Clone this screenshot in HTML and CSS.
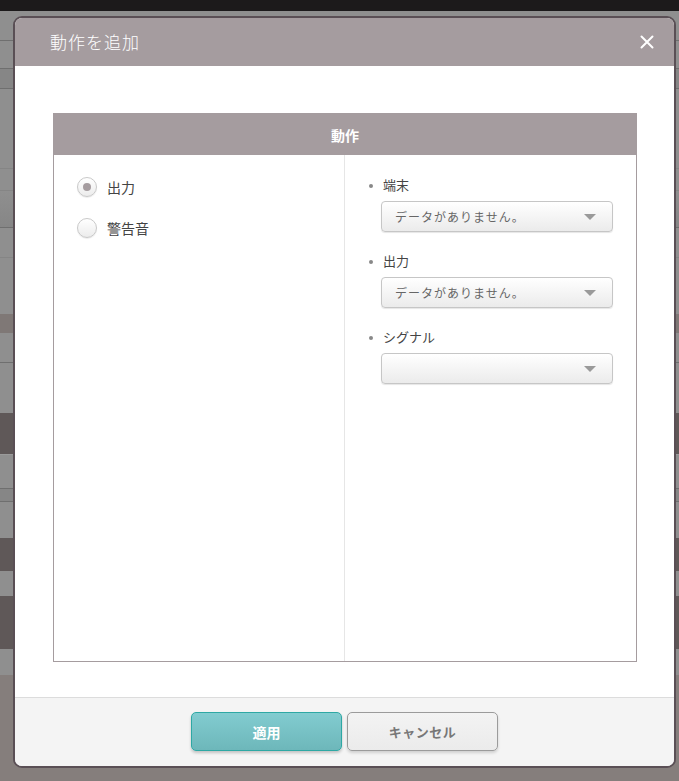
FILE: index.html
```html
<!DOCTYPE html>
<html lang="ja">
<head>
<meta charset="utf-8">
<title>動作を追加</title>
<link rel="stylesheet" href="styles.css">
</head>
<body>
<div class="page">
  <div class="band b-top"></div>
  <div class="band g h30 line"></div>
  <div class="band g h28 line"></div>
  <div class="band g2 h20 line"></div>
  <div class="band g h80 line-l"></div>
  <div class="band g h22 line-l"></div>
  <div class="band g3 h37 line"></div>
  <div class="band g h30 line-l"></div>
  <div class="band g h56"></div>
  <div class="band br h19"></div>
  <div class="band g h30 line"></div>
  <div class="band g h50"></div>
  <div class="band dk h42 line-w"></div>
  <div class="band g h34 line"></div>
  <div class="band g2 h13 line"></div>
  <div class="band g h36"></div>
  <div class="band dk h33"></div>
  <div class="band g h25"></div>
  <div class="band dk h53"></div>
  <div class="band g h26"></div>
  <div class="band bt"></div>
</div>

<div class="modal">
  <div class="modal-header">
    <span class="modal-title">動作を追加</span>
    <svg class="close" width="16" height="16" viewBox="0 0 16 16"><path d="M2.5 2.5 L13.5 13.5 M13.5 2.5 L2.5 13.5" stroke="#fff" stroke-width="2" stroke-linecap="round"/></svg>
  </div>
  <div class="modal-body">
    <div class="panel">
      <div class="panel-head">動作</div>
      <div class="panel-cols">
        <div class="col-left">
          <label class="radio-row"><span class="radio checked"></span><span>出力</span></label>
          <label class="radio-row"><span class="radio"></span><span>警告音</span></label>
        </div>
        <div class="col-right">
          <div class="field">
            <div class="field-label">端末</div>
            <div class="select"><span>データがありません。</span><span class="arrow"></span></div>
          </div>
          <div class="field">
            <div class="field-label">出力</div>
            <div class="select"><span>データがありません。</span><span class="arrow"></span></div>
          </div>
          <div class="field">
            <div class="field-label">シグナル</div>
            <div class="select"><span></span><span class="arrow"></span></div>
          </div>
        </div>
      </div>
    </div>
  </div>
  <div class="modal-footer">
    <button class="btn btn-primary">適用</button>
    <button class="btn btn-cancel">キャンセル</button>
  </div>
</div>
</body>
</html>
```

FILE: styles.css
```css
html, body {
  margin: 0;
  padding: 0;
}
body {
  width: 679px;
  height: 781px;
  overflow: hidden;
  position: relative;
  font-family: "Noto Sans CJK JP", "Noto Sans", sans-serif;
  background: #857e7c;
}
.page {
  display: flex;
  flex-direction: column;
  width: 679px;
  height: 781px;
}
.band { flex: none; box-sizing: border-box; }
.b-top { height: 11px; background: #1c1a1b; }
.g { background: #8f8f8f; }
.g2 { background: #868686; }
.g3 { background: linear-gradient(#8f8f8f, #868686); }
.br { background: #7f7876; }
.dk { background: #5f5858; }
.bt { flex: 1; background: #857e7c; }
.line { border-bottom: 1px solid #6f6f6f; }
.line-l { border-bottom: 1px solid #858585; }
.line-w { border-bottom: 1px solid #9a9a9a; }
.h13 { height: 13px; } .h19 { height: 19px; } .h20 { height: 20px; }
.h22 { height: 22px; } .h25 { height: 25px; } .h26 { height: 26px; }
.h28 { height: 28px; } .h30 { height: 30px; } .h33 { height: 33px; }
.h34 { height: 34px; } .h36 { height: 36px; } .h37 { height: 37px; }
.h42 { height: 42px; } .h50 { height: 50px; } .h53 { height: 53px; }
.h56 { height: 56px; } .h80 { height: 80px; }

.modal {
  position: absolute;
  left: 13px;
  top: 16px;
  width: 663px;
  height: 752px;
  box-sizing: border-box;
  border: 2px solid #5a4f55;
  border-radius: 9px;
  overflow: hidden;
  background: #fff;
  display: flex;
  flex-direction: column;
}
.modal-header {
  height: 48px;
  flex: none;
  background: #a59c9f;
  display: flex;
  align-items: center;
  justify-content: space-between;
  padding: 0 19px 0 35px;
}
.modal-title {
  color: #fff;
  font-size: 17px;
  font-weight: 300;
  letter-spacing: 1px;
  line-height: 20px;
}
.close { display: block; margin-top: -1px; }

.modal-body {
  height: 631px;
  flex: none;
  box-sizing: border-box;
  padding: 47px 37px 0 38px;
}
.panel {
  height: 549px;
  box-sizing: border-box;
  border: 1px solid #a59c9f;
  display: flex;
  flex-direction: column;
}
.panel-head {
  height: 41px;
  flex: none;
  background: #a59c9f;
  color: #fff;
  font-weight: bold;
  font-size: 14px;
  display: flex;
  align-items: center;
  justify-content: center;
  margin: -1px -1px 0 -1px;
  padding-top: 1px;
}
.panel-cols {
  flex: 1;
  display: flex;
}
.col-left {
  width: 291px;
  flex: none;
  border-right: 1px solid #e6e6e6;
  padding: 22px 0 0 23px;
  box-sizing: border-box;
  display: flex;
  flex-direction: column;
  gap: 21px;
}
.radio-row {
  display: flex;
  align-items: center;
  gap: 10px;
  font-size: 14px;
  color: #444;
  height: 20px;
}
.radio {
  width: 20px;
  height: 20px;
  box-sizing: border-box;
  border-radius: 50%;
  border: 1px solid #c9c9c9;
  background: linear-gradient(#ffffff, #ececec);
  box-shadow: 0 1px 1px rgba(0,0,0,0.08);
  display: flex;
  align-items: center;
  justify-content: center;
}
.radio.checked::after {
  content: "";
  width: 8px;
  height: 8px;
  border-radius: 50%;
  background: #a59c9f;
}
.col-right {
  flex: 1;
  padding: 20px 0 0 36px;
  display: flex;
  flex-direction: column;
  gap: 19px;
}
.field-label {
  position: relative;
  height: 20px;
  line-height: 20px;
  font-size: 13px;
  color: #444;
  padding-left: 2px;
  margin-bottom: 6px;
}
.field-label::before {
  content: "";
  position: absolute;
  left: -12px;
  top: 9px;
  width: 4px;
  height: 4px;
  border-radius: 50%;
  background: #888;
}
.select {
  width: 232px;
  height: 31px;
  box-sizing: border-box;
  border: 1px solid #c6c6c6;
  border-radius: 4px;
  background: linear-gradient(#ffffff, #ebebeb);
  box-shadow: 0 1px 1px rgba(0,0,0,0.1);
  display: flex;
  align-items: center;
  justify-content: space-between;
  padding: 0 16px 0 13px;
  font-size: 12px;
  letter-spacing: 1px;
  color: #666;
}
.arrow {
  width: 0;
  height: 0;
  border-left: 6px solid transparent;
  border-right: 6px solid transparent;
  border-top: 6px solid #9a9a9a;
}

.modal-footer {
  flex: 1;
  background: #f4f4f4;
  border-top: 1px solid #dcdcdc;
  display: flex;
  justify-content: center;
  align-items: flex-start;
  gap: 5px;
  padding-top: 14px;
}
.btn {
  width: 151px;
  height: 39px;
  border-radius: 5px;
  font-family: "Noto Sans CJK JP", "Noto Sans", sans-serif;
  font-weight: bold;
  cursor: pointer;
  box-sizing: border-box;
}
.btn-primary {
  background: linear-gradient(#82ccd0, #6db7ba);
  border: 1px solid #2ea8a4;
  color: #fff;
  font-size: 14px;
  box-shadow: 0 2px 3px rgba(0,0,0,0.2);
}
.btn-cancel {
  background: linear-gradient(#f3f3f3, #ebebeb);
  border: 1px solid #9b9b9b;
  color: #777;
  font-size: 13px;
  letter-spacing: 0.5px;
  box-shadow: 0 2px 3px rgba(0,0,0,0.15);
}
```
